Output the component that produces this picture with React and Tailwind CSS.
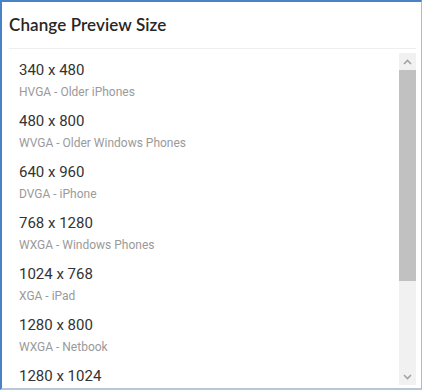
const sizes = [
  { dims: '340 x 480', label: 'HVGA - Older iPhones' },
  { dims: '480 x 800', label: 'WVGA - Older Windows Phones' },
  { dims: '640 x 960', label: 'DVGA - iPhone' },
  { dims: '768 x 1280', label: 'WXGA - Windows Phones' },
  { dims: '1024 x 768', label: 'XGA - iPad' },
  { dims: '1280 x 800', label: 'WXGA - Netbook' },
  { dims: '1280 x 1024' },
];

function Chevron({ up }) {
  return (
    <svg width="9" height="6" viewBox="0 0 9 6" className="block">
      <path
        d={up ? 'M1 5 L4.5 1.5 L8 5' : 'M1 1 L4.5 4.5 L8 1'}
        fill="none"
        stroke="#a3a3a3"
        strokeWidth="1.6"
      />
    </svg>
  );
}

export default function App() {
  return (
    <div className="w-[422px] h-[390px] bg-white flex flex-col border-l-2 border-t-2 border-r border-b-2 border-l-[#4a82c8] border-t-[#4a82c8] border-r-[#a4bede] border-b-[#b9c6d8] font-['Roboto',sans-serif] overflow-hidden">
      {/* Header */}
      <div className="h-[46px] shrink-0 flex items-center pl-[7px]">
        <h2 className="text-[17px] font-semibold text-[#262626] font-['Lato',sans-serif] tracking-[0.1px]">
          Change Preview Size
        </h2>
      </div>
      <div className="h-px bg-[#eeeeee] ml-[7px] mr-[5px] shrink-0" />

      {/* Body */}
      <div className="flex-1 flex min-h-0 pl-[17px] pr-[5px]">
        <ul className="flex-1 overflow-hidden pt-[11px]">
          {sizes.map((s) => (
            <li key={s.dims} className="h-[51px] flex flex-col">
              <span className="text-[15px] leading-5 text-[#333333]">{s.dims}</span>
              {s.label && (
                <span className="text-[12px] leading-4 mt-1 text-[#9a9a9a]">{s.label}</span>
              )}
            </li>
          ))}
        </ul>

        {/* Scrollbar */}
        <div className="w-[17px] mt-1 mb-[3px] flex flex-col bg-[#f1f1f1]">
          <div className="h-[17px] flex items-center justify-center">
            <Chevron up />
          </div>
          <div className="h-[211px] bg-[#c1c1c1]" />
          <div className="flex-1" />
          <div className="h-[17px] flex items-center justify-center">
            <Chevron />
          </div>
        </div>
      </div>
    </div>
  );
}
